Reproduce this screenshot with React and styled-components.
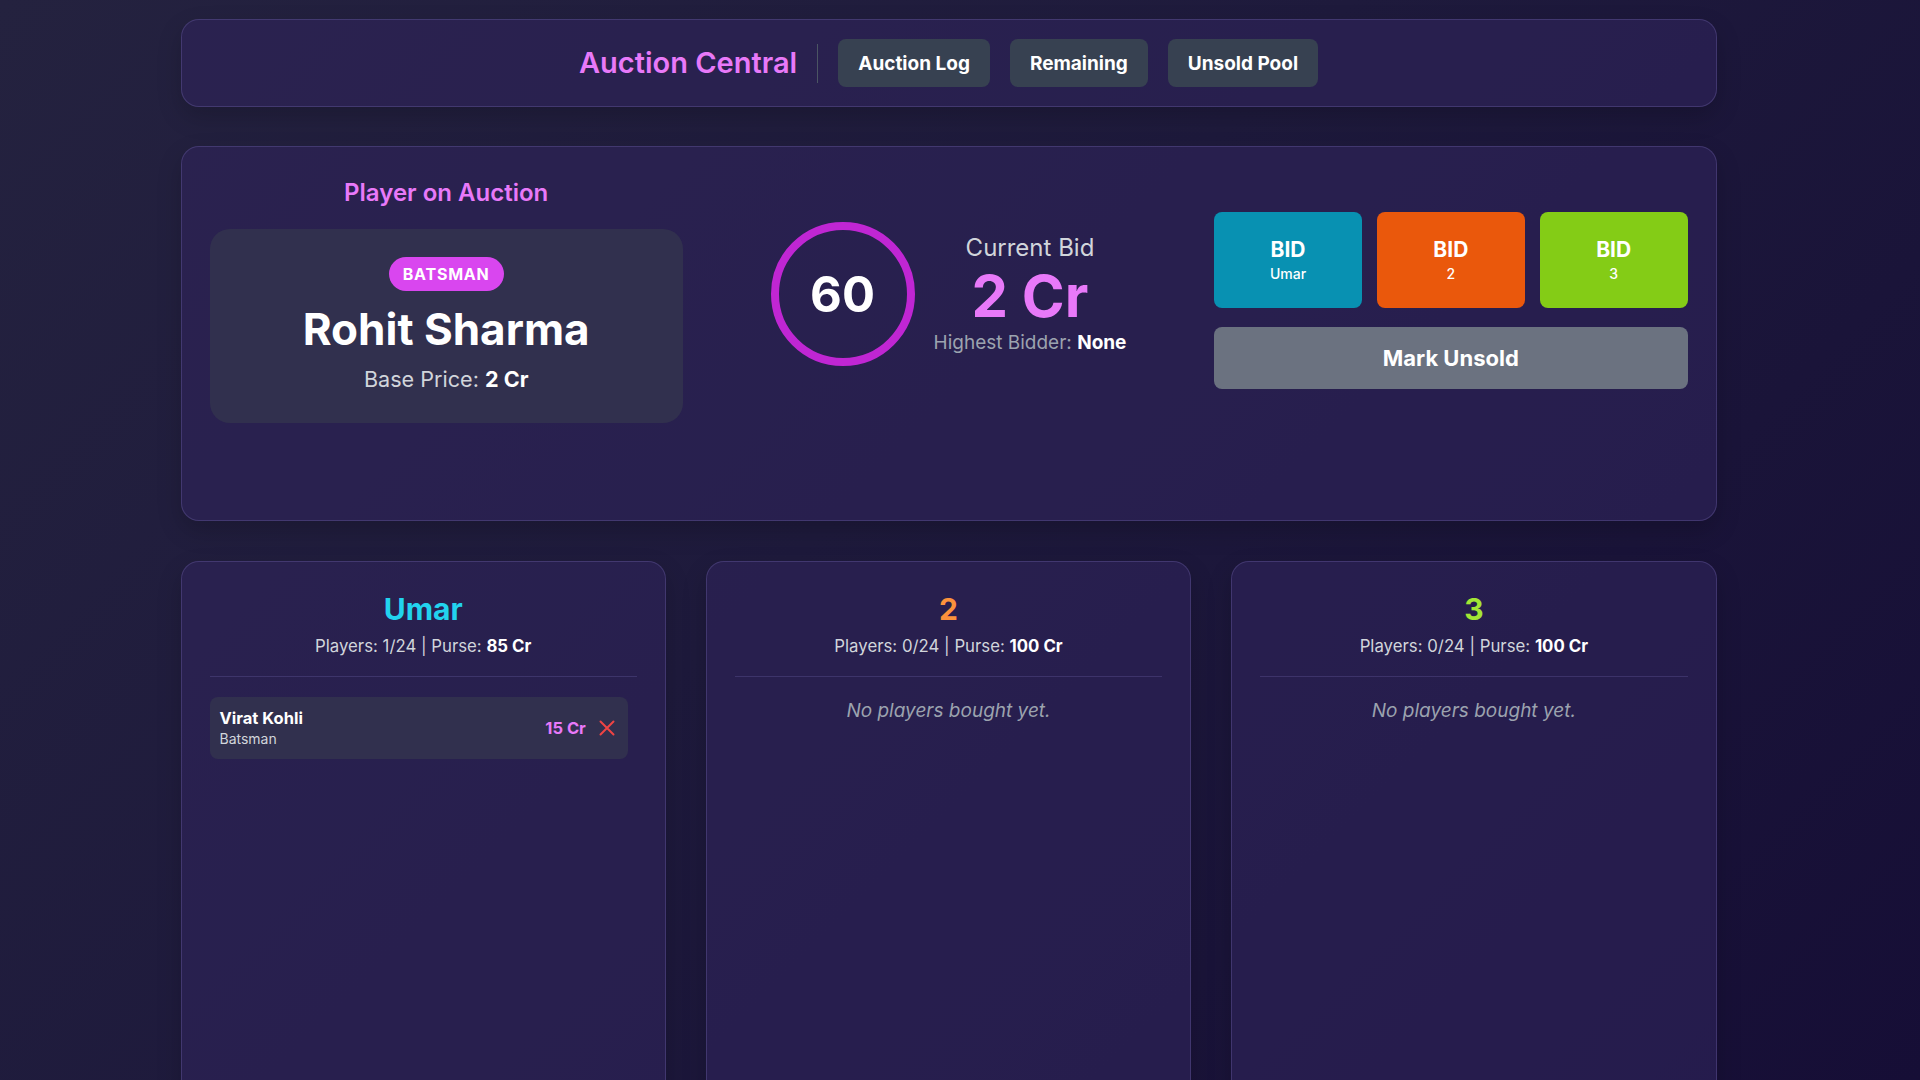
import React from "react";
import styled, { createGlobalStyle } from "styled-components";

const GlobalStyle = createGlobalStyle`
  html {
    color-scheme: dark;
    overflow-y: scroll;
  }
  html, body { margin: 0; padding: 0; }
  body {
    font-family: Inter, "Noto Sans", "Liberation Sans", sans-serif;
    background: linear-gradient(135deg, #24223f 0%, #1e1a3c 45%, #160e36 100%);
    background-attachment: fixed;
    min-height: 100vh;
    color: #fff;
    padding-right: 23px;
  }
  * { box-sizing: border-box; }

  ::-webkit-scrollbar { width: 23px; background: #2c2c2c; }
  ::-webkit-scrollbar-track { background: #2c2c2c; }
  ::-webkit-scrollbar-thumb {
    background: #9f9f9f;
    border-radius: 12px;
    border: 5px solid #2c2c2c;
  }
`;

const Page = styled.div`
  max-width: 1536px;
  margin: 0 auto;
  padding: 19px 0 40px;
`;

const Card = styled.div`
  background: rgba(46, 36, 90, 0.62);
  border: 1px solid rgba(120, 108, 180, 0.32);
  border-radius: 18px;
  box-shadow: 0 10px 25px rgba(0, 0, 0, 0.18);
`;

const Header = styled(Card)`
  display: flex;
  align-items: center;
  justify-content: center;
  gap: 20px;
  padding: 19px 24px;
`;

const Brand = styled.h1`
  margin: 0;
  font-size: 29px;
  line-height: 36px;
  font-weight: 600;
  color: #e879f9;
`;

const VDivider = styled.div`
  width: 1px;
  height: 39px;
  background: #4b5563;
`;

const NavButton = styled.button`
  height: 48px;
  padding: 0 20px;
  border: none;
  border-radius: 8px;
  background: #374151;
  color: #fff;
  font-family: inherit;
  font-size: 19px;
  font-weight: 700;
  cursor: pointer;
`;

const MainCard = styled(Card)`
  margin-top: 39px;
  min-height: 375px;
  padding: 30px 28px 28px;
`;

const AuctionGrid = styled.div`
  display: grid;
  grid-template-columns: repeat(3, 1fr);
  gap: 29px;
  align-items: center;
`;

const Column = styled.div`
  display: flex;
  flex-direction: column;
  align-items: center;
`;

const SectionTitle = styled.h2`
  margin: 0 0 20px;
  font-size: 24px;
  line-height: 32px;
  font-weight: 600;
  color: #e879f9;
`;

const PlayerBox = styled.div`
  width: 100%;
  background: #31304e;
  border-radius: 20px;
  padding: 28px 24px 30px;
  display: flex;
  flex-direction: column;
  align-items: center;
`;

const RoleBadge = styled.span`
  display: inline-block;
  background: #d946ef;
  color: #fff;
  font-size: 16px;
  line-height: 24px;
  font-weight: 700;
  letter-spacing: 0.05em;
  padding: 5px 14px;
  border-radius: 999px;
`;

const PlayerName = styled.div`
  margin-top: 12px;
  font-size: 44px;
  line-height: 53px;
  font-weight: 700;
  color: #fff;
`;

const BasePrice = styled.div`
  margin-top: 9px;
  font-size: 21.6px;
  line-height: 28px;
  color: #d1d5db;
  b { color: #fff; font-weight: 700; }
`;

const BidCenter = styled.div`
  display: flex;
  align-items: center;
  justify-content: center;
  gap: 19px;
  margin-top: -12px;
`;

const Timer = styled.div`
  width: 144px;
  height: 144px;
  border-radius: 50%;
  border: 8px solid #c026d3;
  display: flex;
  align-items: center;
  justify-content: center;
  font-size: 49px;
  font-weight: 700;
  color: #fff;
`;

const BidInfo = styled.div`
  display: flex;
  flex-direction: column;
  align-items: center;
  text-align: center;
`;

const BidLabel = styled.div`
  font-size: 24px;
  line-height: 30px;
  color: #d1d5db;
`;

const BidAmount = styled.div`
  font-size: 58px;
  line-height: 66px;
  font-weight: 700;
  color: #e879f9;
`;

const Bidder = styled.div`
  margin-top: 1px;
  font-size: 19px;
  line-height: 26px;
  color: #9ca3af;
  b { color: #fff; font-weight: 700; }
`;

const Controls = styled.div`
  width: 100%;
  display: flex;
  flex-direction: column;
  gap: 19px;
`;

const BidRow = styled.div`
  display: grid;
  grid-template-columns: repeat(3, 1fr);
  gap: 15px;
`;

const BidButton = styled.button`
  height: 96px;
  border: none;
  border-radius: 8px;
  background: ${(p) => p.$color};
  color: #fff;
  font-family: inherit;
  display: flex;
  flex-direction: column;
  align-items: center;
  justify-content: center;
  cursor: pointer;
`;

const BidMain = styled.span`
  font-size: 21px;
  line-height: 28px;
  font-weight: 700;
`;

const BidSub = styled.span`
  font-size: 14px;
  line-height: 20px;
  font-weight: 500;
`;

const UnsoldButton = styled.button`
  height: 62px;
  border: none;
  border-radius: 8px;
  background: #6b7280;
  color: #fff;
  font-family: inherit;
  font-size: 22px;
  font-weight: 700;
  cursor: pointer;
`;

const TeamsGrid = styled.div`
  margin-top: 40px;
  display: grid;
  grid-template-columns: repeat(3, 1fr);
  gap: 40px;
`;

const TeamCard = styled(Card)`
  min-height: 554px;
  padding: 27px 28px 24px;
`;

const TeamHead = styled.div`
  text-align: center;
  padding-bottom: 16px;
  border-bottom: 1px solid rgba(120, 108, 180, 0.28);
`;

const TeamName = styled.h3`
  margin: 0;
  font-size: 30px;
  line-height: 40px;
  font-weight: 700;
  color: ${(p) => p.$color};
`;

const TeamStats = styled.div`
  margin-top: 3px;
  font-size: 16.8px;
  line-height: 28px;
  color: #d1d5db;
  b { color: #fff; font-weight: 700; }
`;

const PlayerList = styled.div`
  margin-top: 20px;
  padding-right: 9px;
  display: flex;
  flex-direction: column;
  gap: 10px;
`;

const PlayerItem = styled.div`
  height: 62px;
  background: #31304e;
  border-radius: 8px;
  padding: 0 10px;
  display: flex;
  align-items: center;
  justify-content: space-between;
`;

const ItemName = styled.div`
  font-size: 16.5px;
  line-height: 21px;
  font-weight: 700;
  color: #fff;
`;

const ItemRole = styled.div`
  font-size: 14px;
  line-height: 20px;
  color: #d1d5db;
`;

const ItemRight = styled.div`
  display: flex;
  align-items: center;
  gap: 10px;
`;

const ItemPrice = styled.span`
  font-size: 16.5px;
  font-weight: 700;
  color: #e879f9;
`;

const RemoveButton = styled.button`
  background: none;
  border: none;
  padding: 3px;
  display: flex;
  color: #ef4444;
  cursor: pointer;
`;

const Empty = styled.p`
  margin: 20px 0 0;
  text-align: center;
  font-size: 19px;
  line-height: 28px;
  font-style: italic;
  color: #9ca3af;
`;

const XIcon = () => (
  <svg width="16" height="16" viewBox="0 0 16 16" fill="none" stroke="currentColor" strokeWidth="2" strokeLinecap="round">
    <path d="M1.5 1.5 L14.5 14.5 M14.5 1.5 L1.5 14.5" />
  </svg>
);

const teams = [
  { name: "Umar", color: "#22d3ee", btn: "#0891b2", players: 1, purse: 85, roster: [{ name: "Virat Kohli", role: "Batsman", price: 15 }] },
  { name: "2", color: "#fb923c", btn: "#ea580c", players: 0, purse: 100, roster: [] },
  { name: "3", color: "#a3e635", btn: "#84cc16", players: 0, purse: 100, roster: [] },
];

export default function App() {
  return (
    <>
      <GlobalStyle />
      <Page>
        <Header>
          <Brand>Auction Central</Brand>
          <VDivider />
          <NavButton>Auction Log</NavButton>
          <NavButton>Remaining</NavButton>
          <NavButton>Unsold Pool</NavButton>
        </Header>

        <MainCard>
          <AuctionGrid>
            <Column>
              <SectionTitle>Player on Auction</SectionTitle>
              <PlayerBox>
                <RoleBadge>BATSMAN</RoleBadge>
                <PlayerName>Rohit Sharma</PlayerName>
                <BasePrice>
                  Base Price: <b>2 Cr</b>
                </BasePrice>
              </PlayerBox>
            </Column>

            <BidCenter>
              <Timer>60</Timer>
              <BidInfo>
                <BidLabel>Current Bid</BidLabel>
                <BidAmount>2 Cr</BidAmount>
                <Bidder>
                  Highest Bidder: <b>None</b>
                </Bidder>
              </BidInfo>
            </BidCenter>

            <Controls>
              <BidRow>
                {teams.map((t) => (
                  <BidButton key={t.name} $color={t.btn}>
                    <BidMain>BID</BidMain>
                    <BidSub>{t.name}</BidSub>
                  </BidButton>
                ))}
              </BidRow>
              <UnsoldButton>Mark Unsold</UnsoldButton>
            </Controls>
          </AuctionGrid>
        </MainCard>

        <TeamsGrid>
          {teams.map((t) => (
            <TeamCard key={t.name}>
              <TeamHead>
                <TeamName $color={t.color}>{t.name}</TeamName>
                <TeamStats>
                  Players: {t.players}/24 | Purse: <b>{t.purse} Cr</b>
                </TeamStats>
              </TeamHead>
              {t.roster.length ? (
                <PlayerList>
                  {t.roster.map((p) => (
                    <PlayerItem key={p.name}>
                      <div>
                        <ItemName>{p.name}</ItemName>
                        <ItemRole>{p.role}</ItemRole>
                      </div>
                      <ItemRight>
                        <ItemPrice>{p.price} Cr</ItemPrice>
                        <RemoveButton aria-label="remove">
                          <XIcon />
                        </RemoveButton>
                      </ItemRight>
                    </PlayerItem>
                  ))}
                </PlayerList>
              ) : (
                <Empty>No players bought yet.</Empty>
              )}
            </TeamCard>
          ))}
        </TeamsGrid>
      </Page>
    </>
  );
}
